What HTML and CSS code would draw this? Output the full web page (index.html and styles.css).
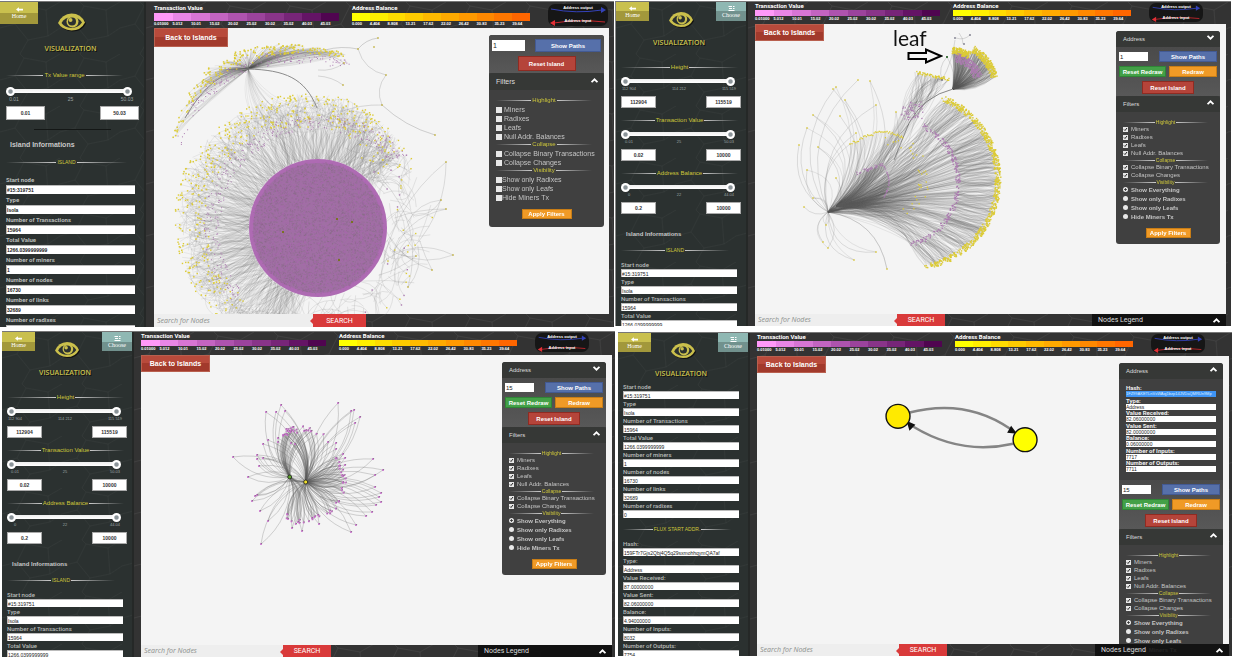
FILE: index.html
```html
<!DOCTYPE html>
<html lang="en">
<head>
<meta charset="utf-8">
<title>Visualization</title>
<link rel="stylesheet" href="styles.css">
</head>
<body>
<svg class="symbols" aria-hidden="true">
  <symbol id="eye" viewBox="0 0 54 36">
    <path d="M0 20Q8 2 27 1Q46 1 54 19Q46 35 27 35Q8 34 0 20Z" fill="#cbc04c"/>
    <path d="M7 20Q13 9 27 8Q41 8 48 19Q41 29 27 30Q13 29 7 20Z" fill="#2b3130"/>
    <circle cx="29" cy="17" r="12" fill="#cbc04c"/>
    <circle cx="28" cy="17" r="8" fill="#2b3130"/>
    <circle cx="25" cy="14" r="4" fill="#cbc04c"/>
  </symbol>
  <symbol id="back" viewBox="0 0 12 8"><path d="M0 4L5 0V2.500H12V5.500H5V8Z" fill="#fff"/></symbol>
  <symbol id="list" viewBox="0 0 12 10"><path d="M0 0H7V2H0ZM9 0H12V2H9ZM1 4H7V6H1ZM9 4H12V6H9ZM0 8H12V10H0Z" fill="#fff"/></symbol>
  <symbol id="up" viewBox="0 0 12 8"><path d="M1 7L6 2L11 7" fill="none" stroke="#fff" stroke-width="3"/></symbol>
  <symbol id="down" viewBox="0 0 12 8"><path d="M1 1L6 6L11 1" fill="none" stroke="#fff" stroke-width="3"/></symbol>
  <symbol id="flow" viewBox="0 0 60 22">
    <path d="M3 5Q28 10 54 6" fill="none" stroke="#3442b8"/><path d="M53 3L58 6L53 9Z" fill="#3442b8"/>
    <path d="M6 19Q30 15 57 18" fill="none" stroke="#c4262c"/><path d="M7 16L2 19L7 22Z" fill="#e23036"/>
  </symbol>
</svg>
<main class="board">

<section class="panel panel-wide">
  <aside class="side">
    <header class="side-head">
      <button class="tile home"><svg><use href="#back"/></svg>Home</button>
      <svg class="eye"><use href="#eye"/></svg>
    </header>
    <h1>VISUALIZATION</h1>
    <div class="ranges">
      <div class="range">
        <h3 class="rule">Tx Value range</h3>
        <div class="track"><input type="range" value="0" aria-label="Lowest value"><input type="range" value="100" aria-label="Highest value"></div>
        <div class="ticks"><span>0.01</span><span>25</span><span>50.03</span></div>
        <div class="bounds"><input value="0.01" aria-label="From"><input value="50.03" aria-label="To"></div>
      </div>
    </div>
    <hr>
    <h2>Island Informations</h2>
    <h3 class="rule">ISLAND</h3>
    <div class="fields">
      <label>Start node<input value="#15:319751" readonly></label>
      <label>Type<input value="Isola" readonly></label>
      <label>Number of Transactions<input value="15964" readonly></label>
      <label>Total Value<input value="1266.0399999999" readonly></label>
      <label>Number of miners<input value="1" readonly></label>
      <label>Number of nodes<input value="16730" readonly></label>
      <label>Number of links<input value="32689" readonly></label>
      <label>Number of radixes<input value="0" readonly></label>
    </div>
  </aside>
  <div class="main">
    <header class="scales">
      <div class="scale violet"><h4>Transaction Value</h4><ol><li>0.01000</li><li>5.012</li><li>10.01</li><li>15.02</li><li>20.02</li><li>25.02</li><li>30.02</li><li>35.02</li><li>40.03</li><li>45.03</li></ol></div>
      <div class="scale amber"><h4>Address Balance</h4><ol><li>0.000</li><li>4.404</li><li>8.808</li><li>13.21</li><li>17.62</li><li>22.02</li><li>26.42</li><li>30.83</li><li>35.23</li><li>39.64</li></ol></div>
      <div class="flow"><svg><use href="#flow"/></svg><span>Address output</span><span>Address input</span></div>
    </header>
    <div class="stage">
      <canvas class="graph" data-graph="island" data-x="154" data-y="28"></canvas>
      <button class="back">Back to Islands</button>
      <form class="tools">
        <div class="actions">
          <input class="hops" value="1" aria-label="Path length"><button type="button" class="blue">Show Paths</button>
          <button type="button" class="red">Reset Island</button>
        </div>
        <div class="bar">Filters<svg><use href="#up"/></svg></div>
        <div class="filters">
          <h3 class="rule">Highlight</h3>
          <div class="checks">
            <label><input type="checkbox">Miners</label>
            <label><input type="checkbox">Radixes</label>
            <label><input type="checkbox">Leafs</label>
            <label><input type="checkbox">Null Addr. Balances</label>
          </div>
          <h3 class="rule">Collapse</h3>
          <div class="checks">
            <label><input type="checkbox">Collapse Binary Transactions</label>
            <label><input type="checkbox">Collapse Changes</label>
          </div>
          <h3 class="rule">Visibility</h3>
          <div class="checks tight">
            <label><input type="checkbox">Show only Radixes</label>
            <label><input type="checkbox">Show only Leafs</label>
            <label><input type="checkbox">Hide Miners Tx</label>
          </div>
          <button type="button" class="orange apply">Apply Filters</button>
        </div>
      </form>
    </div>
    <footer class="foot"><input placeholder="Search for Nodes" aria-label="Search for Nodes"><button>SEARCH</button></footer>
  </div>
</section>

<section class="panel panel-leaf">
  <aside class="side">
    <header class="side-head">
      <button class="tile home"><svg><use href="#back"/></svg>Home</button>
      <svg class="eye"><use href="#eye"/></svg>
      <button class="tile choose"><svg><use href="#list"/></svg>Choose</button>
    </header>
    <h1>VISUALIZATION</h1>
    <div class="ranges">
      <div class="range">
        <h3 class="rule">Height</h3>
        <div class="track"><input type="range" value="0" aria-label="Lowest value"><input type="range" value="100" aria-label="Highest value"></div>
        <div class="ticks"><span>112 904</span><span>114 212</span><span>115 519</span></div>
        <div class="bounds"><input value="112904" aria-label="From"><input value="115519" aria-label="To"></div>
      </div>
      <div class="range">
        <h3 class="rule">Transaction Value</h3>
        <div class="track"><input type="range" value="0" aria-label="Lowest value"><input type="range" value="100" aria-label="Highest value"></div>
        <div class="ticks"><span>0.01</span><span>25</span><span>50.03</span></div>
        <div class="bounds"><input value="0.02" aria-label="From"><input value="10000" aria-label="To"></div>
      </div>
      <div class="range">
        <h3 class="rule">Address Balance</h3>
        <div class="track"><input type="range" value="0" aria-label="Lowest value"><input type="range" value="100" aria-label="Highest value"></div>
        <div class="ticks"><span>0</span><span>22</span><span>44.04</span></div>
        <div class="bounds"><input value="0.2" aria-label="From"><input value="10000" aria-label="To"></div>
      </div>
    </div>
    <h2>Island Informations</h2>
    <h3 class="rule">ISLAND</h3>
    <div class="fields">
      <label>Start node<input value="#15:319751" readonly></label>
      <label>Type<input value="Isola" readonly></label>
      <label>Number of Transactions<input value="15964" readonly></label>
      <label>Total Value<input value="1266.0399999999" readonly></label>
    </div>
  </aside>
  <div class="main">
    <header class="scales">
      <div class="scale violet"><h4>Transaction Value</h4><ol><li>0.01000</li><li>5.012</li><li>10.01</li><li>15.02</li><li>20.02</li><li>25.02</li><li>30.02</li><li>35.02</li><li>40.03</li><li>45.03</li></ol></div>
      <div class="scale amber"><h4>Address Balance</h4><ol><li>0.000</li><li>4.404</li><li>8.808</li><li>13.21</li><li>17.62</li><li>22.02</li><li>26.42</li><li>30.83</li><li>35.23</li><li>39.64</li></ol></div>
      <div class="flow"><svg><use href="#flow"/></svg><span>Address output</span><span>Address input</span></div>
    </header>
    <div class="stage">
      <canvas class="graph" data-graph="fan" data-x="755" data-y="24"></canvas>
      <button class="back">Back to Islands</button>
      <div class="pointer">leaf<svg viewBox="0 0 36 16"><path d="M1.500 5H19V1.500L34 8L19 14.500V11H1.500Z" fill="#f4f4f4" stroke="#000" stroke-width="2"/></svg></div>
      <form class="tools">
        <div class="bar">Address<svg><use href="#down"/></svg></div>
        <div class="actions">
          <input class="hops" value="1" aria-label="Path length"><button type="button" class="blue">Show Paths</button>
          <button type="button" class="green">Reset Redraw</button><button type="button" class="orange">Redraw</button>
          <button type="button" class="red">Reset Island</button>
        </div>
        <div class="bar">Filters<svg><use href="#up"/></svg></div>
        <div class="filters">
          <h3 class="rule">Highlight</h3>
          <div class="checks">
            <label><input type="checkbox" checked>Miners</label>
            <label><input type="checkbox" checked>Radixes</label>
            <label><input type="checkbox" checked>Leafs</label>
            <label><input type="checkbox" checked>Null Addr. Balances</label>
          </div>
          <h3 class="rule">Collapse</h3>
          <div class="checks">
            <label><input type="checkbox" checked>Collapse Binary Transactions</label>
            <label><input type="checkbox" checked>Collapse Changes</label>
          </div>
          <h3 class="rule">Visibility</h3>
          <div class="radios">
            <label><input type="radio" name="show" checked>Show Everything</label>
            <label><input type="radio" name="show">Show only Radixes</label>
            <label><input type="radio" name="show">Show only Leafs</label>
            <label><input type="radio" name="show">Hide Miners Tx</label>
          </div>
          <button type="button" class="orange apply">Apply Filters</button>
        </div>
      </form>
    </div>
    <footer class="foot"><input placeholder="Search for Nodes" aria-label="Search for Nodes"><button>SEARCH</button><div class="legend">Nodes Legend<svg><use href="#up"/></svg></div></footer>
  </div>
</section>

<section class="panel panel-flower">
  <aside class="side">
    <header class="side-head">
      <button class="tile home"><svg><use href="#back"/></svg>Home</button>
      <svg class="eye"><use href="#eye"/></svg>
      <button class="tile choose"><svg><use href="#list"/></svg>Choose</button>
    </header>
    <h1>VISUALIZATION</h1>
    <div class="ranges">
      <div class="range">
        <h3 class="rule">Height</h3>
        <div class="track"><input type="range" value="0" aria-label="Lowest value"><input type="range" value="100" aria-label="Highest value"></div>
        <div class="ticks"><span>112 904</span><span>114 212</span><span>115 519</span></div>
        <div class="bounds"><input value="112904" aria-label="From"><input value="115519" aria-label="To"></div>
      </div>
      <div class="range">
        <h3 class="rule">Transaction Value</h3>
        <div class="track"><input type="range" value="0" aria-label="Lowest value"><input type="range" value="100" aria-label="Highest value"></div>
        <div class="ticks"><span>0.01</span><span>25</span><span>50.03</span></div>
        <div class="bounds"><input value="0.02" aria-label="From"><input value="10000" aria-label="To"></div>
      </div>
      <div class="range">
        <h3 class="rule">Address Balance</h3>
        <div class="track"><input type="range" value="0" aria-label="Lowest value"><input type="range" value="100" aria-label="Highest value"></div>
        <div class="ticks"><span>0</span><span>22</span><span>44.04</span></div>
        <div class="bounds"><input value="0.2" aria-label="From"><input value="10000" aria-label="To"></div>
      </div>
    </div>
    <h2>Island Informations</h2>
    <h3 class="rule">ISLAND</h3>
    <div class="fields">
      <label>Start node<input value="#15:319751" readonly></label>
      <label>Type<input value="Isola" readonly></label>
      <label>Number of Transactions<input value="15964" readonly></label>
      <label>Total Value<input value="1266.0399999999" readonly></label>
    </div>
  </aside>
  <div class="main">
    <header class="scales">
      <div class="scale violet"><h4>Transaction Value</h4><ol><li>0.01000</li><li>5.012</li><li>10.01</li><li>15.02</li><li>20.02</li><li>25.02</li><li>30.02</li><li>35.02</li><li>40.03</li><li>45.03</li></ol></div>
      <div class="scale amber"><h4>Address Balance</h4><ol><li>0.000</li><li>4.404</li><li>8.808</li><li>13.21</li><li>17.62</li><li>22.02</li><li>26.42</li><li>30.83</li><li>35.23</li><li>39.64</li></ol></div>
      <div class="flow"><svg><use href="#flow"/></svg><span>Address output</span><span>Address input</span></div>
    </header>
    <div class="stage">
      <canvas class="graph" data-graph="flower" data-x="141" data-y="355"></canvas>
      <button class="back">Back to Islands</button>
      <form class="tools">
        <div class="bar">Address<svg><use href="#down"/></svg></div>
        <div class="actions">
          <input class="hops" value="15" aria-label="Path length"><button type="button" class="blue">Show Paths</button>
          <button type="button" class="green">Reset Redraw</button><button type="button" class="orange">Redraw</button>
          <button type="button" class="red">Reset Island</button>
        </div>
        <div class="bar">Filters<svg><use href="#up"/></svg></div>
        <div class="filters">
          <h3 class="rule">Highlight</h3>
          <div class="checks">
            <label><input type="checkbox" checked>Miners</label>
            <label><input type="checkbox" checked>Radixes</label>
            <label><input type="checkbox" checked>Leafs</label>
            <label><input type="checkbox" checked>Null Addr. Balances</label>
          </div>
          <h3 class="rule">Collapse</h3>
          <div class="checks">
            <label><input type="checkbox" checked>Collapse Binary Transactions</label>
            <label><input type="checkbox" checked>Collapse Changes</label>
          </div>
          <h3 class="rule">Visibility</h3>
          <div class="radios">
            <label><input type="radio" name="show" checked>Show Everything</label>
            <label><input type="radio" name="show">Show only Radixes</label>
            <label><input type="radio" name="show">Show only Leafs</label>
            <label><input type="radio" name="show">Hide Miners Tx</label>
          </div>
          <button type="button" class="orange apply">Apply Filters</button>
        </div>
      </form>
    </div>
    <footer class="foot"><input placeholder="Search for Nodes" aria-label="Search for Nodes"><button>SEARCH</button><div class="legend">Nodes Legend<svg><use href="#up"/></svg></div></footer>
  </div>
</section>

<section class="panel panel-pair">
  <aside class="side">
    <header class="side-head">
      <button class="tile home"><svg><use href="#back"/></svg>Home</button>
      <svg class="eye"><use href="#eye"/></svg>
      <button class="tile choose"><svg><use href="#list"/></svg>Choose</button>
    </header>
    <h1>VISUALIZATION</h1>
    <div class="fields">
      <label>Start node<input value="#15:319751" readonly></label>
      <label>Type<input value="Isola" readonly></label>
      <label>Number of Transactions<input value="15964" readonly></label>
      <label>Total Value<input value="1266.0399999999" readonly></label>
      <label>Number of miners<input value="1" readonly></label>
      <label>Number of nodes<input value="16730" readonly></label>
      <label>Number of links<input value="32689" readonly></label>
      <label>Number of radixes<input value="0" readonly></label>
    </div>
    <h3 class="rule">FLUX START ADDR.</h3>
    <div class="fields">
      <label>Hash:<input value="159FTr7Gjs2Qbj4Q5q29sxmohhqymQA7af" readonly></label>
      <label>Type:<input value="Address" readonly></label>
      <label>Value Received:<input value="87.00000000" readonly></label>
      <label>Value Sent:<input value="82.06000000" readonly></label>
      <label>Balance:<input value="4.94000000" readonly></label>
      <label>Number of Inputs:<input value="8032" readonly></label>
      <label>Number of Outputs:<input value="7754" readonly></label>
    </div>
  </aside>
  <div class="main">
    <header class="scales">
      <div class="scale violet"><h4>Transaction Value</h4><ol><li>0.01000</li><li>5.012</li><li>10.01</li><li>15.02</li><li>20.02</li><li>25.02</li><li>30.02</li><li>35.02</li><li>40.03</li><li>45.03</li></ol></div>
      <div class="scale amber"><h4>Address Balance</h4><ol><li>0.000</li><li>4.404</li><li>8.808</li><li>13.21</li><li>17.62</li><li>22.02</li><li>26.42</li><li>30.83</li><li>35.23</li><li>39.64</li></ol></div>
      <div class="flow"><svg><use href="#flow"/></svg><span>Address output</span><span>Address input</span></div>
    </header>
    <div class="stage">
      <svg class="graph" viewBox="757 356 472 289" preserveAspectRatio="xMinYMin meet">
        <g fill="none" stroke="#858585" stroke-width="2.500"><path d="M909 413Q966 398 1011 429"/><path d="M1014 444Q962 456 914 427"/></g>
        <path d="M1018 434L1008 433L1012 426ZM907 421L910 431L916 425Z" fill="#111"/>
        <g stroke="#111" stroke-width="1.400"><circle cx="898.500" cy="416.500" r="12" fill="#ffea00"/><circle cx="1026" cy="440" r="12" fill="#ff0"/></g>
      </svg>
      <button class="back">Back to Islands</button>
      <form class="tools">
        <div class="bar">Address<svg><use href="#up"/></svg></div>
        <div class="address">
          <label>Hash:<input class="picked" value="1FZ99AKETLnVxWAqj1bzp14JVDaQMRUn9Mp" readonly></label>
          <label>Type:<input value="Address" readonly></label>
          <label>Value Received:<input value="82.06000000" readonly></label>
          <label>Value Sent:<input value="82.00000000" readonly></label>
          <label>Balance:<input value="0.06000000" readonly></label>
          <label>Number of Inputs:<input value="7717" readonly></label>
          <label>Number of Outputs:<input value="7711" readonly></label>
        </div>
        <div class="actions">
          <input class="hops" value="15" aria-label="Path length"><button type="button" class="blue">Show Paths</button>
          <button type="button" class="green">Reset Redraw</button><button type="button" class="orange">Redraw</button>
          <button type="button" class="red">Reset Island</button>
        </div>
        <div class="bar">Filters<svg><use href="#up"/></svg></div>
        <div class="filters">
          <h3 class="rule">Highlight</h3>
          <div class="checks">
            <label><input type="checkbox" checked>Miners</label>
            <label><input type="checkbox" checked>Radixes</label>
            <label><input type="checkbox" checked>Leafs</label>
            <label><input type="checkbox" checked>Null Addr. Balances</label>
          </div>
          <h3 class="rule">Collapse</h3>
          <div class="checks">
            <label><input type="checkbox" checked>Collapse Binary Transactions</label>
            <label><input type="checkbox" checked>Collapse Changes</label>
          </div>
          <h3 class="rule">Visibility</h3>
          <div class="radios">
            <label><input type="radio" name="show" checked>Show Everything</label>
            <label><input type="radio" name="show">Show only Radixes</label>
            <label><input type="radio" name="show">Show only Leafs</label>
            <label><input type="radio" name="show">Hide Miners Tx</label>
          </div>
        </div>
      </form>
    </div>
    <footer class="foot"><input placeholder="Search for Nodes" aria-label="Search for Nodes"><button>SEARCH</button><div class="legend">Nodes Legend<svg><use href="#up"/></svg></div></footer>
  </div>
</section>

</main>
<script src="graphs.js"></script>
</body>
</html>
```

FILE: styles.css
```css
*, *::before, *::after { box-sizing: border-box; }
body { margin: 0; background: #fff; font-family: "Liberation Sans", Arial, sans-serif; font-size: 6px; }
h1, h2, h3, h4, ol { margin: 0; padding: 0; font-weight: normal; font-size: inherit; list-style: none; }
input, button { font: inherit; margin: 0; padding: 0; border: 0; border-radius: 0; min-width: 0; }
button { cursor: pointer; white-space: nowrap; }
.symbols { position: absolute; width: 0; height: 0; }

.board { display: grid; grid-template-columns: 615fr 619fr; grid-template-rows: 329fr 328fr; height: 100vh; overflow: hidden; }
.panel {
  --title: 6px; --row: 8px; --rule: 6px;
  display: grid; grid-template-columns: 132px 1fr; min-height: 0; min-width: 0; overflow: hidden;
  background: #333; border-top: 1px solid #777;
}
.panel-wide { --title: 7px; --row: 9px; --rule: 7px; grid-template-columns: 146px 1fr; margin: 1px 1px 2px 0; }
.panel-leaf { margin: 1px 3px 3px 0; border-left: 1px solid #888; }
.panel-flower { margin: 2px 0 0 2px; }
.panel-pair { margin: 3px 2px 1px 3px; }

/* sidebar */
.side {
  overflow: hidden; min-height: 0; background-color: #2b3130; border-right: 2px solid #252827; box-shadow: 2px 0 3px #222;
  background-image: url("data:image/svg+xml,%3Csvg xmlns='http://www.w3.org/2000/svg' width='60' height='52'%3E%3Cpath d='M0 26L15 22L24 4L20 0M24 4L46 8L60 0M15 22L28 38L20 52M28 38L48 34L60 26M46 8L48 34' fill='none' stroke='%23fff' stroke-opacity='.03'/%3E%3C/svg%3E");
  padding: 0 9px 0 5px;
}
.panel-wide .side { padding: 0 9px 0 6px; }
.side-head { display: grid; grid-template-columns: 1fr auto 1fr; height: 35px; margin: 0 -9px 0 -5px; }
.tile { width: 33px; height: 19px; color: #fff; font-family: "Liberation Serif", serif; font-size: 6px; line-height: 7px; display: flex; flex-direction: column; align-items: center; padding-top: 4px; gap: 1px; }
.tile svg { width: 7px; height: 5px; }
.home { background: linear-gradient(#c9c04e 50%, #a2983b 50%); }
.choose { background: linear-gradient(#8fb8b3 50%, #71918d 50%); width: 30px; justify-self: end; }
.eye { width: 24px; height: 17px; margin-top: 9px; filter: drop-shadow(1px 1px 0 #111); }
h1 { color: #cbc04c; font: 600 7px/12px "Open Sans", sans-serif; text-align: center; text-shadow: 1px 1px 0 #111; }
.panel-wide .side-head { height: 39px; margin: 0 -7px 0 -6px; }
.panel-wide .tile { width: 38px; height: 22px; padding-top: 5px; }
.panel-wide .eye { width: 27px; height: 18px; margin-top: 11px; }
.panel-wide h1 { line-height: 16px; }

.rule { display: flex; align-items: center; justify-content: center; gap: 1px; color: #cdc63a; font-size: 5px; line-height: var(--rule); white-space: nowrap; }
.rule::before, .rule::after { content: ""; flex: 1; height: 1px; background: linear-gradient(90deg, transparent, #ccc); }
.rule::after { background: linear-gradient(270deg, transparent, #ccc); }
.side .rule { line-height: 8px; }
.side .range .rule { font-size: 6px; }
.panel-wide .filters .rule { font-size: 6px; }

.ranges { display: grid; gap: 8px; padding-top: 14px; margin-right: -4px; }
.range { display: grid; }
.range .rule { padding-right: 3px; }
.track { display: grid; grid-template-columns: 1fr 1fr; margin: 5px 6px 0 0; height: 10px; align-items: center; background: linear-gradient(#eee, #fff) center / calc(100% - 6px) 4px no-repeat; }
.track input { appearance: none; width: 100%; height: 10px; background: none; }
.track input::-webkit-slider-thumb { appearance: none; width: 9px; height: 9px; border-radius: 50%; background: radial-gradient(circle, #8b9499 0 25%, #fff 45%); }
.ticks { display: grid; grid-template-columns: 16px 1fr 16px; text-align: center; color: #9ba3a5; font-size: 4px; line-height: 5px; margin-right: 4px; white-space: nowrap; }
.bounds { display: flex; justify-content: space-between; padding-top: 5px; }
.bounds input { width: 35px; height: 12px; text-align: center; font-weight: bold; font-size: 5px; color: #333; background: #fff; outline: 1px solid #aaa; outline-offset: -1px; }
.panel-wide .ranges { padding-top: 14px; }
.panel-wide .range .rule { line-height: 9px; padding-right: 16px; }
.panel-wide .track { margin-top: 6px; margin-right: 7px; }
.panel-wide .ticks { font-size: 5px; line-height: 6px; }
.panel-wide .bounds { padding-top: 4px; }
.panel-wide .bounds input { width: 39px; height: 14px; }
hr { height: 1px; border: 0; background: #141716; margin: 9px 24px 0 28px; }

h2 { color: #c8c8c8; font-weight: bold; font-size: 6px; line-height: 10px; padding: 15px 0 0 5px; }
h2 + .rule { margin: 7px 8px 0 0; }
.panel-wide h2 { font-size: 7px; padding: 10px 0 0 4px; }
.panel-wide h2 + .rule { margin-top: 8px; }
.fields { display: grid; grid-auto-rows: 17px; padding-top: 6px; }
.fields label { display: grid; grid-template-rows: 9px 8px; color: #b8bcba; font: 500 6px/9px "Liberation Sans Narrow", Roboto, sans-serif; }
.fields input { width: 100%; height: 8px; background: #fff; color: #222; border: 1px solid #bbb; border-width: 1px 0 0 1px; font: 5px/6px "Liberation Sans Narrow", "Liberation Sans", sans-serif; }
.panel-wide .fields { grid-auto-rows: 20px; padding-top: 8px; }
.panel-wide .fields label { grid-template-rows: 11px 9px; line-height: 11px; font-weight: bold; }
.panel-wide .fields input { height: 9px; font-family: "Liberation Sans", sans-serif; font-weight: bold; }
.panel-pair .fields { padding-top: 2px; }
.panel-pair .side > .rule { margin-right: 8px; }
.panel-pair .fields + .rule { margin-top: 7px; }
.panel-pair .rule + .fields { padding-top: 6px; }

/* main column */
.main { display: grid; grid-template-rows: 23px 1fr 12px; min-width: 0; min-height: 0; padding: 0 3px 0 7px; background-color: #333;
  background-image: url("data:image/svg+xml,%3Csvg xmlns='http://www.w3.org/2000/svg' width='60' height='52'%3E%3Cpath d='M0 26L15 22L24 4L20 0M24 4L46 8L60 0M15 22L28 38L20 52M28 38L48 34L60 26M46 8L48 34' fill='none' stroke='%23fff' stroke-opacity='.06'/%3E%3C/svg%3E"); }
.panel-leaf .main { grid-template-rows: 22px 1fr 12px; padding-right: 5px; }
.panel-wide .main { grid-template-rows: 26px 1fr 13px; padding-left: 8px; padding-right: 5px; }
.scales { display: flex; color: #fff; }
.scale { flex: 0 0 185px; margin-right: 13px; }
.amber { flex-basis: 178px; margin-right: 18px; }
.scale h4 { font: bold 6px/8px "Liberation Sans Narrow", Roboto, sans-serif; }
.scale ol { display: grid; grid-template-columns: repeat(10, 1fr); font: bold 4px/6px "Liberation Sans", sans-serif; }
.scale li { white-space: nowrap; min-width: 0; }
.scale li::before { content: ""; display: block; height: 6px; background: var(--c); }
.panel-wide .scale h4 { line-height: 11px; }
.panel-wide .scale li::before { height: 8px; }
.violet li:nth-child(1) { --c: #ff99f8; } .violet li:nth-child(2) { --c: #e986e6; }
.violet li:nth-child(3) { --c: #d775d4; } .violet li:nth-child(4) { --c: #c364c1; }
.violet li:nth-child(5) { --c: #ae53ae; } .violet li:nth-child(6) { --c: #9b439c; }
.violet li:nth-child(7) { --c: #893489; } .violet li:nth-child(8) { --c: #772578; }
.violet li:nth-child(9) { --c: #641465; } .violet li:nth-child(10) { --c: #500550; }
.amber li:nth-child(1) { --c: #ffff00; } .amber li:nth-child(2) { --c: #ffee00; }
.amber li:nth-child(3) { --c: #ffdc00; } .amber li:nth-child(4) { --c: #ffcb00; }
.amber li:nth-child(5) { --c: #ffba00; } .amber li:nth-child(6) { --c: #ffaa00; }
.amber li:nth-child(7) { --c: #ff9900; } .amber li:nth-child(8) { --c: #ff8800; }
.amber li:nth-child(9) { --c: #ff7700; } .amber li:nth-child(10) { --c: #ff6600; }
.flow { display: grid; grid-template: 9px 9px / 54px; width: 54px; height: 19px; margin-top: 1px; background: #161616; border-radius: 7px; text-align: center; font: bold 4px/7px "Liberation Sans", sans-serif; }
.flow svg { grid-area: 1 / 1 / 3 / 2; width: 54px; height: 19px; }
.flow span:nth-of-type(1) { grid-area: 1 / 1; }
.flow span:nth-of-type(2) { grid-area: 2 / 1; padding-top: 2px; }
.panel-wide .flow { grid-template: 11px 11px / 60px; width: 60px; height: 22px; margin-top: 2px; }
.panel-wide .flow svg { width: 60px; height: 22px; }

.stage { position: relative; min-height: 0; background: #f4f4f4; }
.graph { display: block; position: absolute; left: 0; top: 0; width: 100%; height: 100%; }
.back { position: absolute; left: 0; top: 0; width: 69px; height: 17px; color: #fff; font-weight: bold; font-size: 7px; background: linear-gradient(#b84a3b 50%, #a23a2c 50%); border: 1px solid #b9604f; }
.panel-wide .back { width: 74px; height: 19px; }
.pointer { position: absolute; left: 138px; top: 1px; font: 21px/25px Lato, sans-serif; color: #111; }
.pointer svg { display: block; width: 36px; height: 16px; margin-left: 14px; margin-top: -2px; }

.tools { position: absolute; top: 7px; right: 6px; width: 104px; border-radius: 3px; background: #404040; color: #c4c4c4; }
.panel-wide .tools { width: 115px; right: 5px; }
.panel-wide .actions { border-radius: 3px 3px 0 0; }
.bar { display: flex; align-items: center; justify-content: space-between; height: 16px; padding: 0 6px 0 7px; background: #363836; color: #ddd; font-size: var(--title); border-radius: 3px 3px 0 0; }
.bar svg, .legend svg { width: 7px; height: 5px; margin-bottom: 3px; }
.panel-wide .bar { height: 17px; }
.actions { display: grid; grid-template-columns: 47px 48px; column-gap: 3px; row-gap: 4px; padding: 4px 3px 2px; background: linear-gradient(#4a4a4a, #585858); align-items: center; }
.actions button, .apply { height: 11px; color: #fff; font-weight: bold; font-size: 6px; }
.hops { width: 29px; height: 9px; background: #fff; color: #222; font-size: 6px; padding-left: 1px; }
.blue { background: #5670aa; border: 1px solid #435a93; width: 58px; justify-self: end; }
.green { background: #43a047; border: 1px solid #2f8536; }
.orange { background: #f09a26; border: 1px solid #c87d16; }
.red { background: #b5443a; border: 1px solid #8f2b22; grid-column: 1 / 3; justify-self: center; width: 52px; }
.actions .red { height: 13px; }
.panel-wide .actions { grid-template-columns: 34px 1fr; padding: 4px 3px 2px; }
.panel-wide .hops { width: 33px; height: 11px; font-size: 7px; }
.panel-wide .blue { width: 66px; height: 13px; }
.panel-wide .actions .red { width: 58px; height: 15px; }
.filters { padding: 7px 0 6px 7px; display: grid; }
.filters .rule { padding-right: 12px; }
.checks, .radios { display: grid; }
.checks { grid-auto-rows: var(--row); font-size: var(--title); }
.radios { grid-auto-rows: 9px; font-weight: bold; }
.checks label, .radios label { display: flex; align-items: center; gap: 3px; white-space: nowrap; }
.checks input { appearance: none; width: 5px; height: 5px; background: #e8e8e8; }
.checks input:checked { background: #e8e8e8 url("data:image/svg+xml,%3Csvg xmlns='http://www.w3.org/2000/svg' viewBox='0 0 5 5'%3E%3Cpath d='M1 2.500L2 3.500L4 1' fill='none' stroke='%23222'/%3E%3C/svg%3E"); }
.panel-wide .checks { padding-top: 1px; }
.panel-wide .checks input { width: 6px; height: 6px; }
.panel-wide .checks label { gap: 2px; }
.panel-wide .checks.tight label { gap: 0; }
.radios input { appearance: none; width: 5px; height: 5px; border-radius: 50%; background: #e8e8e8; }
.radios input:checked { background: radial-gradient(circle, #333 0 25%, #e8e8e8 40%); }
.apply { height: 10px; width: 45px; margin: 7px 7px 0 0; justify-self: center; }
.panel-wide .apply { width: 50px; margin-top: 7px; }
.panel-wide .filters { padding-bottom: 8px; }
.address { display: grid; height: 101px; padding: 6px 7px 7px; }
.address label { display: grid; grid-template-rows: 6px 6px; color: #eee; font: bold 6px/6px "Liberation Sans Narrow", Roboto, sans-serif; }
.address input { width: 100%; height: 6px; background: #fff; color: #222; font: 5px/6px "Liberation Sans", sans-serif; }
.address .picked { background: #3e94f5; color: #dcecff; font-size: 4px; }

.foot { display: flex; position: relative; z-index: 1; }
.foot input { width: 142px; background: #eee; font: italic 7px/12px "Open Sans", sans-serif; padding-left: 3px; }
.foot input::placeholder { color: #8b8f8d; }
.foot button { width: 48px; background: #d93a3a; color: #fff; font: 7px/12px Roboto, sans-serif; position: relative; }
.foot button::before { content: ""; position: absolute; left: -3px; top: 4px; border: solid transparent; border-width: 3px 3px 3px 0; border-right-color: #d93a3a; }
.panel-wide .foot input { width: 159px; }
.panel-wide .foot button { width: 53px; }
.legend { margin-left: auto; width: 134px; display: flex; align-items: center; justify-content: space-between; padding: 0 6px; background: rgba(12, 12, 12, .88); color: #ddd; font: 7px/12px Roboto, sans-serif; }
.legend svg { margin-bottom: 0; }
```

FILE: graphs.js
```js
(function () {
  var seed = 7;
  function rnd() { seed = (seed * 16807) % 2147483647; return seed / 2147483647; }
  function span(a, b) { return a + (b - a) * rnd(); }
  function rad(d) { return d * Math.PI / 180; }
  function at(cx, cy, r, deg) { return [cx + r * Math.cos(rad(deg)), cy + r * Math.sin(rad(deg))]; }

  // A bend is the control point's distance from the chord, as a share of its length.
  function link(c, a, b, bend, alpha, width) {
    var mx = (a[0] + b[0]) / 2 - (b[1] - a[1]) * bend;
    var my = (a[1] + b[1]) / 2 + (b[0] - a[0]) * bend;
    c.strokeStyle = 'rgba(90,90,90,' + alpha + ')';
    c.lineWidth = width || 0.5;
    c.beginPath(); c.moveTo(a[0], a[1]); c.quadraticCurveTo(mx, my, b[0], b[1]); c.stroke();
  }
  function dot(c, p, colour, size) {
    c.fillStyle = colour; c.fillRect(p[0] - size / 2, p[1] - size / 2, size, size);
  }
  var YELLOW = '#dccb35', PURPLE = '#ab7bb0';

  // Outer edge of the main ring, by angle: full on the left, thin on the right.
  function edge(a) {
    if (a > 285) return 130 - (a - 285) * 0.4;
    if (a < 125) return 105 + (a - 60) * 0.4;
    return 146 - Math.abs(a - 200) * 0.17;
  }

  function island(c) {
    var cx = 318, cy = 228, i, a, p, q, e, dots = [];
    for (i = 0; i < 1050; i++) {
      a = span(105, 318);
      e = edge(a);
      p = at(cx, cy, 69, a + span(-10, 10));
      q = at(cx, cy, span(92, e), a);
      link(c, p, q, span(-0.35, 0.35), 0.17);
      if (i % 3 === 0) dots.push([at(cx, cy, e - 34 * Math.pow(rnd(), 1.4), a), YELLOW, 1.4]);
    }
    for (i = 0; i < 520; i++) {
      a = span(100, 325); e = edge(a);
      q = at(cx, cy, span(e - 30, e), a);
      p = at(cx, cy, span(95, e - 8), a + span(-16, 16));
      link(c, p, q, span(-0.7, 0.7), 0.2);
      if (a > 150 && a < 300 && i % 2) dots.push([q, YELLOW, 1.5]);
    }
    for (i = 0; i < 330; i++) dots.push([at(cx, cy, span(98, 114), span(140, 320)), PURPLE, 1]);
    for (i = 0; i < 120; i++) {
      a = span(-60, 100);
      q = at(cx, cy, span(76, 118), a);
      p = at(cx, cy, span(66, 104), a + span(-25, 25));
      link(c, p, q, span(-0.6, 0.6), 0.26);
      if (i % 2) dots.push([q, i % 3 ? YELLOW : PURPLE, 1.4]);
    }
    // outer cluster, fanned out from one busy node
    var hub = [248, 69];
    for (i = 0; i < 330; i++) {
      var t = Math.pow(rnd(), 0.75), u = 1 - t;
      q = [u * u * 174 + 2 * u * t * 212 + t * t * 345, u * u * 137 + 2 * u * t * 24 + t * t * 56];
      var wide = 5 * Math.sin(Math.PI * t) + 2;
      q[0] += span(-wide, wide); q[1] += span(-wide, wide);
      link(c, hub, q, q[0] < 248 ? span(-0.02, 0.25) : span(-0.2, 0.06), 0.17);
      if (i % 3) dots.push([q, YELLOW, 1.5]);
      if (i % 2) dots.push([[q[0] + span(0, 8), q[1] + span(5, 11)], PURPLE, 1]);
    }
    for (i = 0; i < 22; i++) link(c, hub, at(cx, cy, span(90, 125), span(240, 275)), span(0.1, 0.4), 0.16);
    c.strokeStyle = '#8a8a8a'; c.lineWidth = 1;
    c.beginPath(); c.moveTo(185, 118); c.quadraticCurveTo(212, 70, 248, 69); c.bezierCurveTo(285, 70, 305, 78, 317, 108); c.stroke();
    var right = [[358, 49], [378, 38], [374, 47], [344, 63], [343, 85], [386, 75], [382, 105], [435, 135], [446, 162], [441, 200], [446, 209], [453, 255], [432, 270], [416, 256], [408, 287]];
    link(c, [325, 50], right[0], -0.12, 0.5); link(c, right[0], right[1], -0.2, 0.5); link(c, right[0], right[5], 0.3, 0.4);
    link(c, right[5], right[6], 0.3, 0.4); link(c, right[6], right[7], 0.12, 0.5); link(c, [318, 55], right[3], -0.2, 0.4);
    link(c, [318, 70], right[3], 0.2, 0.4); link(c, [318, 76], right[4], -0.15, 0.4); link(c, right[6], [340, 112], 0.1, 0.4);
    for (i = 8; i < right.length; i++) {
      link(c, at(cx, cy, span(70, 105), span(-40, 40)), right[i], span(-0.5, 0.5), 0.35);
      link(c, at(cx, cy, span(70, 105), span(-20, 40)), right[i], span(-0.3, 0.3), 0.35);
    }
    right.forEach(function (r) { dots.push([r, '#bfae35', 1.5]); });
    dots.forEach(function (d) { dot(c, d[0], d[1], d[2]); });
    c.fillStyle = '#ae6bb3'; c.beginPath(); c.arc(cx, cy, 69, 0, 7); c.fill();
    c.fillStyle = '#a06fa4'; c.beginPath(); c.arc(cx, cy, 65, 0, 7); c.fill();
    for (i = 0; i < 6500; i++) {
      p = at(cx, cy, 66 * Math.sqrt(rnd()), span(0, 360));
      dot(c, p, rnd() < 0.5 ? 'rgba(110,110,105,.25)' : 'rgba(185,95,190,.25)', 1);
    }
    [[283, 232], [352, 222], [337, 219], [339, 260]].forEach(function (g) { dot(c, g, '#7a7322', 2); });
  }

  function fan(c) {
    var i, a, t, p, q, h1 = [828, 212], h2 = [836, 206], dots = [];
    for (i = 0; i < 620; i++) {
      a = span(-66, 76);
      p = at(895, 183, span(61, 66), a);
      q = at(910, 180, span(85, 91), a * 1.02 + span(-3, 3));
      link(c, p, q, span(-0.25, 0.25), 0.24);
      if (i < 400) link(c, i % 3 ? h2 : h1, p, a > 0 ? -span(0.05, 0.42) * a / 76 : span(-0.05, 0.35) * -a / 66, 0.22);
      dots.push([q, YELLOW, 1.4]);
      if (i % 3 === 0) dots.push([p, PURPLE, 1.3]);
    }
    // small arc of balances inside the fan
    for (i = 0; i < 75; i++) {
      q = at(885, 178, span(33, 46), -90 + 150 * rnd());
      link(c, h2, q, span(-0.1, 0.3), 0.16);
      if (i % 2) dots.push([q, YELLOW, 1.3]);
    }
    for (i = 0; i < 110; i++) {
      t = Math.pow(rnd(), 0.7);
      q = t < 0.6 ? [856 + t * 45, 174 - t * 16 + span(-2, 2)] : [884 + Math.sin((t - 0.6) * 8) * 5, 166 + (t - 0.6) * 80];
      link(c, h2, q, span(0.1, 0.3), 0.24);
      if (i % 2) dots.push([q, PURPLE, 1.2]);
    }
    for (i = 0; i < 55; i++) {
      q = [915 + 35 * rnd(), 72 + span(-1, 2)]; q[1] += (q[0] - 915) * 0.2;
      p = [905 + span(-4, 18), 106 + span(-4, 14)];
      link(c, p, q, span(-0.4, 0.4), 0.28); link(c, h2, p, span(0.02, 0.2), 0.14);
      dots.push([q, YELLOW, 1.3]); dots.push([p, PURPLE, 1.2]);
    }
    for (i = 0; i < 40; i++) {
      q = [852 + i * 1.3, 143 - Math.sin(i / 40 * 2.6) * 11 + span(-1, 2)];
      link(c, h1, q, span(0.1, 0.3), 0.22); dots.push([q, YELLOW, 1.3]);
    }
    var loose = [[799, 145], [813, 115], [807, 128], [833, 89], [836, 87], [845, 100], [858, 80], [870, 81], [876, 105], [840, 116], [807, 170], [813, 198], [804, 207], [818, 147], [826, 225], [823, 242], [828, 248], [854, 260], [887, 269], [876, 252], [850, 144], [836, 178], [856, 133], [896, 112]];
    loose.forEach(function (n, k) {
      link(c, h1, n, k % 2 ? 0.5 : -0.35, 0.34);
      if (k % 3) link(c, n, h1, n[0] < 830 ? -0.6 : -0.3, 0.25);
      dots.push([n, '#d8c638', 1.5]);
    });
    link(c, h1, [915, 72], 0.4, 0.3); link(c, h1, [887, 269], -0.35, 0.3);
    var top = [953, 89];
    for (i = 0; i < 330; i++) {
      a = span(-88, -14); q = at(951, 88, span(41, 48) - (a < -60 ? 7 : 0), a); p = at(951, 86, span(24, 33), a * 0.85 - 6);
      link(c, top, q, span(-0.02, 0.26), 0.25); dots.push([q, YELLOW, 1.4]); if (i % 2) dots.push([p, PURPLE, 1.4]);
    }
    link(c, h2, [880, 172], 0.16, 0.5, 0.9); link(c, [880, 172], [909, 124], -0.12, 0.5, 0.9);
    link(c, [909, 123], top, -0.22, 0.8, 0.9); link(c, [894, 160], [909, 123], 0, 0.7, 0.9);
    link(c, [942, 80], [947, 57], -0.3, 0.4); link(c, [942, 80], [955, 40], 0.1, 0.4); link(c, [956, 38], [970, 35], 0.3, 0.4);
    link(c, [947, 57], top, -0.2, 0.4); link(c, [963, 44], [959, 33], 0.2, 0.4);
    [[942, 80], [955, 38], [964, 44], [970, 35]].forEach(function (n) { dots.push([n, '#667', 1.5]); });
    dots.push([[947, 57], '#474', 2]);
    dots.forEach(function (d) { dot(c, d[0], d[1], d[2]); });
  }

  function flower(c) {
    var green = [289.7, 477], gold = [305.7, 482];
    var nodes = [[281, 405], [285, 411], [266, 412], [276, 412], [338, 403], [351, 411], [354, 410], [360, 417], [355, 423], [233, 457], [257, 455], [257, 459], [263, 458], [248, 477], [252, 501], [255, 496], [257, 495], [260, 511], [268, 521], [261, 544], [373, 459], [383, 470], [375, 475], [375, 487], [381, 493], [379, 497], [381, 502], [376, 505], [372, 512], [366, 516], [356, 525], [351, 532], [288, 519], [292, 528], [302, 531], [298, 522], [312, 518], [319, 524], [263, 444], [268, 440], [278, 438], [278, 442], [291, 443], [295, 444], [259, 466], [343, 454], [345, 458], [345, 465], [336, 443], [336, 449], [328, 442]];
    var i, a;
    for (i = 0; i < 28; i++) { a = span(-125, -60); nodes.push([303 + Math.cos(rad(a)) * 42, 478 + Math.sin(rad(a)) * span(45, 54)]); }
    for (i = 0; i < 26; i++) { a = span(-38, 60); nodes.push([306 + Math.cos(rad(a)) * span(34, 42), 482 + Math.sin(rad(a)) * 39]); }
    for (i = 0; i < 14; i++) { a = span(62, 125); nodes.push([303 + Math.cos(rad(a)) * 36, 482 + Math.sin(rad(a)) * span(35, 44)]); }
    nodes.forEach(function (n) {
      link(c, gold, n, 0.26, 0.5);
      if (n[0] < 320) link(c, green, n, -0.26, 0.5); else link(c, gold, n, -0.2, 0.5);
    });
    for (i = 0; i < 8; i++) link(c, green, gold, span(-0.4, 0.4), 0.5);
    nodes.forEach(function (n) { dot(c, n, '#c86fcb', 1.8); dot(c, [n[0] + 0.7, n[1] - 0.5], '#666', 0.8); });
    [[green, '#5fa52c'], [gold, '#f0e02a']].forEach(function (n) {
      c.fillStyle = n[1]; c.strokeStyle = '#222'; c.lineWidth = 0.8;
      c.beginPath(); c.arc(n[0][0], n[0][1], 2, 0, 7); c.fill(); c.stroke();
    });
  }

  var draw = { island: island, fan: fan, flower: flower };
  document.querySelectorAll('canvas.graph').forEach(function (el) {
    el.width = el.clientWidth; el.height = el.clientHeight;
    var c = el.getContext('2d');
    c.translate(-Number(el.dataset.x), -Number(el.dataset.y));
    draw[el.dataset.graph](c);
  });
})();
```
